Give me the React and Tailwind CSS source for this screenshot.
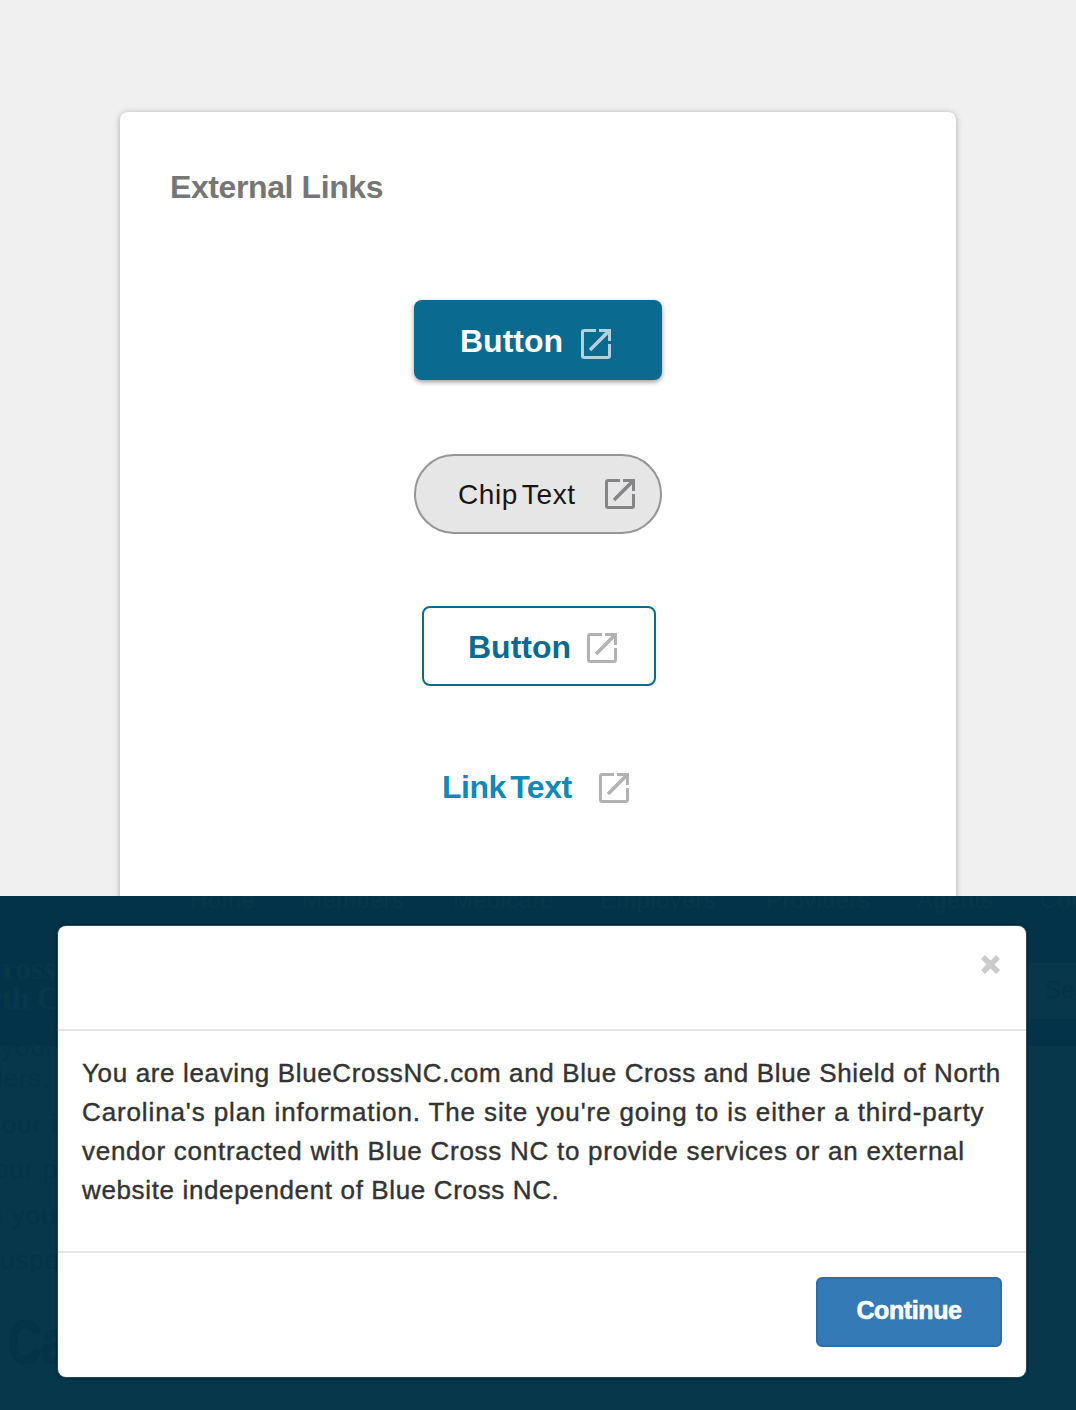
function ExternalIcon({ className }) {
  return (
    <svg viewBox="0 0 30 30" className={`h-[30px] w-[30px] shrink-0 ${className}`} fill="none" stroke="currentColor" strokeWidth="3">
      <path d="M15 1.5H3.2Q1.5 1.5 1.5 3.2V26.8Q1.5 28.5 3.2 28.5H26.8Q28.5 28.5 28.5 26.8V15" />
      <path fill="currentColor" stroke="none" d="M18 0H30V12H27V5.6L10.2 22.2L7.8 19.8L24.4 3H18Z" />
    </svg>
  );
}

const nav = [
  ['Home', 'left-[190px]'],
  ['Members', 'left-[302px]'],
  ['Medicare', 'left-[453px]'],
  ['Employers', 'left-[600px]'],
  ['Providers', 'left-[766px]'],
  ['Agents', 'left-[917px]'],
  ['Contact', 'left-[1040px]'],
];

const ghosts = [
  ['your i', 'left-[1px] top-[136px]'],
  ['ders,', 'left-[-12px] top-[167px]'],
  ['our i', 'left-[2px] top-[213px]'],
  ['our pl', 'left-[-6px] top-[258px]'],
  ['n you', 'left-[-12px] top-[304px]'],
  ['suspec', 'left-[-14px] top-[349px]'],
];

const body = [
  ['You are leaving BlueCrossNC.com and Blue Cross and Blue Shield of North', 'tracking-[0.64px]'],
  ["Carolina's plan information. The site you're going to is either a third-party", 'tracking-[0.88px]'],
  ['vendor contracted with Blue Cross NC to provide services or an external', 'tracking-[0.73px]'],
  ['website independent of Blue Cross NC.', 'tracking-[0.64px]'],
];

function Backdrop() {
  return (
    <div aria-hidden="true" className="absolute inset-0 overflow-hidden whitespace-nowrap">
      <div className="mt-[150px] h-[364px] bg-[#07374a]" />
      <div className="absolute right-0 top-[67px] h-[56px] w-[60px] bg-[#07374a]" />
      {nav.map(([t, pos]) => (
        <span key={t} className={`absolute top-[-10px] text-[24px] leading-[28px] tracking-[0.3px] text-[#06384c] ${pos}`}>{t}</span>
      ))}
      <span className="absolute left-[-20px] top-[57px] font-['Liberation_Serif'] text-[31px] font-bold leading-[32px] text-[#07384a]">Cross</span>
      <span className="absolute left-[-12px] top-[87px] font-['Liberation_Serif'] text-[31px] font-bold leading-[32px] text-[#07384a]">rth C</span>
      <span className="absolute left-[1045px] top-[80px] text-[24px] leading-[28px] text-[#043347]">Search</span>
      {ghosts.map(([t, pos]) => (
        <span key={t} className={`absolute text-[26px] leading-[30px] tracking-[1px] text-[#043448] ${pos}`}>{t}</span>
      ))}
      <span className="absolute left-[8px] top-[408px] origin-left scale-x-75 text-[62px] font-bold leading-[76px] text-[#033448] [-webkit-text-stroke:2px_#033448]">Care</span>
    </div>
  );
}

export default function App() {
  return (
    <main className="h-[1410px] w-[1076px] overflow-hidden bg-[#f0f0f0] font-['Liberation_Sans',sans-serif]">
      <section className="h-[896px] overflow-hidden px-[120px] pt-[112px]">
        <div className="h-[820px] rounded-lg bg-white pt-[56px] shadow-[0_1px_6px_rgba(0,0,0,0.3)]">
          <h1 className="ml-[50px] text-[32px] font-bold leading-[38px] tracking-[-0.4px] text-[#767676]">External Links</h1>
          <div className="mt-[94px] flex flex-col items-center">
            <button className="flex h-[80px] w-[248px] rounded-lg bg-[#0b6a90] pl-[46px] shadow-[0_2px_5px_rgba(0,0,0,0.4)]">
              <span className="mt-[22px] w-[121px] text-left text-[32px] font-bold leading-[38px] text-white">Button</span>
              <ExternalIcon className="mt-[29px] text-[#b5d1dd]" />
            </button>
            <div className="mt-[74px] flex h-[80px] w-[248px] rounded-full border-2 border-[#969696] bg-[#e6e6e6] pl-[42px]">
              <span className="mt-[23px] w-[147px] whitespace-nowrap text-[28px] leading-[32px] tracking-[0.6px] [word-spacing:-4px] text-[#161616]">Chip Text</span>
              <ExternalIcon className="mt-[23px] text-[#858588]" />
            </div>
            <button className="ml-[2px] mt-[72px] flex h-[80px] w-[234px] rounded-lg border-2 border-[#0b6a90] bg-white pl-[44px]">
              <span className="mt-[20px] w-[119px] text-left text-[32px] font-bold leading-[38px] text-[#0b6a90]">Button</span>
              <ExternalIcon className="mt-[25px] text-[#b2b2b2]" />
            </button>
            <a className="ml-[4px] mt-[82px] flex w-[196px] text-[#1288b8]">
              <span className="w-[157px] whitespace-nowrap text-[32px] font-bold leading-[38px] tracking-[-0.5px] [word-spacing:-4px]">Link Text</span>
              <ExternalIcon className="mt-[5px] text-[#b2b2b2]" />
            </a>
          </div>
        </div>
      </section>

      <section className="relative h-[514px] bg-[#033348] pl-[58px] pt-[29.5px]">
        <Backdrop />
        <div className="relative h-[451.5px] w-[968px] rounded-lg bg-white shadow-[0_0_0_1px_#294b59,0_0_3px_1px_#001c2a]">
          <header className="flex h-[105.5px] justify-end border-b-2 border-[#e5e5e5] pr-[26px] pt-[29.5px]">
            <svg viewBox="0 0 19 19" className="h-[19px] w-[19px]" stroke="#cbcbcb" strokeWidth="5.6">
              <path d="M2 2L17 17M17 2L2 17" />
            </svg>
          </header>
          <div className="h-[222px] border-b-2 border-[#e5e5e5] pl-[24px] pt-[23px] text-[26px] leading-[39px] text-[#333] [-webkit-text-stroke:0.4px_#333]">
            {body.map(([t, track]) => (
              <p key={t} className={`whitespace-nowrap ${track}`}>{t}</p>
            ))}
          </div>
          <footer className="flex justify-end pr-[24px] pt-[24px]">
            <button className="h-[70px] w-[186px] rounded-md border-2 border-[#2e6da4] bg-[#347ab7] text-[25px] font-bold leading-[62px] tracking-[-0.4px] text-white [-webkit-text-stroke:0.6px_#fff]">
              <span className="block pb-[4px]">Continue</span>
            </button>
          </footer>
        </div>
      </section>
    </main>
  );
}
